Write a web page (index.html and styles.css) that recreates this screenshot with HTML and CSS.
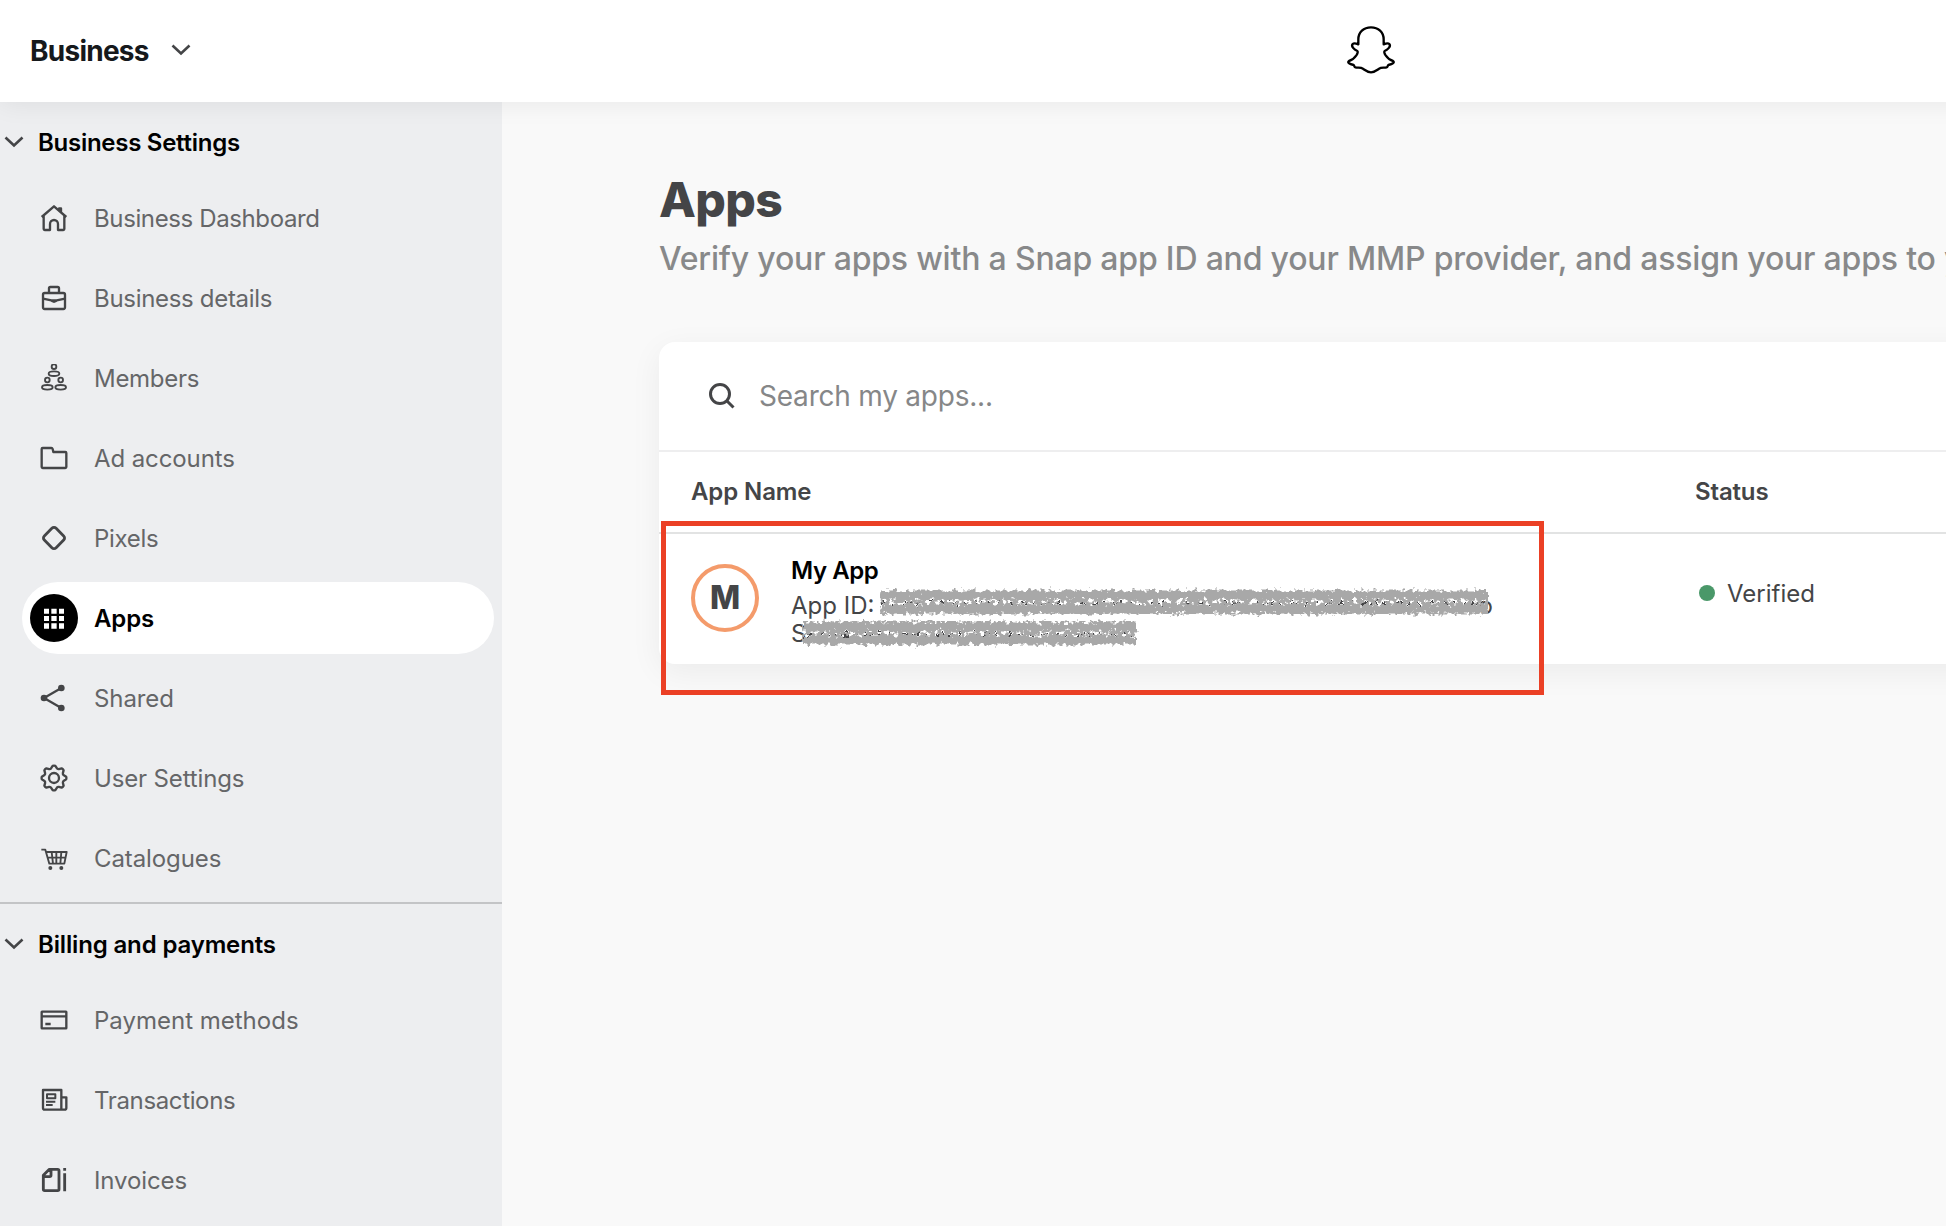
FILE: index.html
```html
<!DOCTYPE html>
<html lang="en">
<head>
	<meta charset="UTF-8">
	<title>Apps</title>
	<link rel="stylesheet" href="styles.css">
</head>
<body>
	<div class="header">
		<div class="switcher">
			<span class="switcher-name">Business</span>
			<svg class="chevron" viewBox="0 0 20 12"><path d="M1.5 1.5 L10 9.5 L18.5 1.5"/></svg>
		</div>
		<svg class="logo" viewBox="78 45 150 147">
			<path d="M115 103 V88 C115 66 131 52 153 52 C175 52 191 66 191 88 V103 C198 100 204 98 208 102 C214 109 203 119 194 123 C191 126 193 130 197 136 C204 146 211 151 219 153 C225 157 219 162 205 165 C202 168 204 171 200 172 C192 174 184 172 177 176 C168 182 163 187 153 187 C143 187 138 182 129 176 C122 172 114 174 106 172 C102 171 104 168 101 165 C87 162 81 157 87 153 C95 151 102 146 109 136 C113 130 115 126 112 123 C103 119 92 109 98 102 C102 98 108 100 115 103 Z"/>
		</svg>
	</div>
	<div class="wrap">
		<div class="side">
			<div class="group">
				<div class="group-title">
					<svg class="chevron" viewBox="0 0 20 12"><path d="M1.5 1.5 L10 9.5 L18.5 1.5"/></svg>
					<span class="t-settings">Business Settings</span>
				</div>
				<ul>
					<li>
						<i><svg viewBox="-42 -42 84 84"><path d="M-37 -3 L0 -35 L37 -3 M-31 -7 V33 Q-31 36 -28 36 H-12 V18 A12 12 0 0 1 12 18 V36 H28 Q31 36 31 33 V-7 M13 -29 H21 V-18"/></svg></i>
						<span class="t-dash">Business Dashboard</span>
					</li>
					<li>
						<i><svg viewBox="-42 -42 84 84"><rect x="-33" y="-15" width="66" height="48" rx="5"/><path d="M-15 -16 V-29 Q-15 -33 -11 -33 H11 Q15 -33 15 -29 V-16 M-33 2 L-8 7 H8 L33 2"/><path class="fill" d="M-12 6 H12 Q8 15 0 15 Q-8 15 -12 6 Z"/></svg></i>
						<span class="t-details">Business details</span>
					</li>
					<li>
						<i><svg viewBox="-42 -42 84 84" class="thin"><circle cx="0" cy="-34" r="7"/><ellipse cx="0" cy="-13" rx="16" ry="7"/><circle cx="-20" cy="6" r="7"/><circle cx="20" cy="6" r="7"/><ellipse cx="-20" cy="28" rx="16" ry="7"/><ellipse cx="20" cy="28" rx="16" ry="7"/></svg></i>
						<span class="t-members">Members</span>
					</li>
					<li>
						<i><svg viewBox="-42 -42 84 84"><path d="M-37 -27 Q-37 -30 -34 -30 H-8 Q-5 -30 -4 -27 L-2 -18 H34 Q37 -18 37 -15 V27 Q37 30 34 30 H-34 Q-37 30 -37 27 Z"/></svg></i>
						<span class="t-accounts">Ad accounts</span>
					</li>
					<li>
						<i><svg viewBox="-42 -42 84 84" class="bold"><rect x="-25" y="-25" width="50" height="50" rx="9" transform="rotate(45)"/></svg></i>
						<span class="t-pixels">Pixels</span>
					</li>
					<li class="active">
						<i><svg viewBox="-42 -42 84 84"><path class="fill" d="M-30 -28h15v15h-15z M-8 -28h16v15h-16z M15 -28h15v15h-15z M-30 -6h15v15h-15z M-8 -6h16v15h-16z M15 -6h15v15h-15z M-30 16h15v16h-15z M-8 16h16v16h-16z M15 16h15v16h-15z"/></svg></i>
						<span class="t-apps">Apps</span>
					</li>
					<li>
						<i><svg viewBox="-42 -42 84 84"><path d="M22 -30 L-30 0 L22 30"/><g class="fill"><circle cx="-30" cy="0" r="10"/><circle cx="22" cy="-30" r="10"/><circle cx="22" cy="30" r="10"/></g></svg></i>
						<span class="t-shared">Shared</span>
					</li>
					<li>
						<i><svg viewBox="-42 -42 84 84"><circle cx="0" cy="0" r="15"/><path d="M36.5 -4 Q38 0 36.5 4 L28.6 9 Q26 12 26.6 14.5 L28.8 23 Q27 27 23 28.8 L14.5 26.6 Q11 26 9 28.6 L4 36.5 Q0 38 -4 36.5 L-9 28.6 Q-12 26 -14.5 26.6 L-23 28.8 Q-27 27 -28.8 23 L-26.6 14.5 Q-26 11 -28.6 9 L-36.5 4 Q-38 0 -36.5 -4 L-28.6 -9 Q-26 -12 -26.6 -14.5 L-28.8 -23 Q-27 -27 -23 -28.8 L-14.5 -26.6 Q-11 -26 -9 -28.6 L-4 -36.5 Q0 -38 4 -36.5 L9 -28.6 Q12 -26 14.5 -26.6 L23 -28.8 Q27 -27 28.8 -23 L26.6 -14.5 Q26 -11 28.6 -9 Z"/></svg></i>
						<span class="t-user">User Settings</span>
					</li>
					<li>
						<i><svg viewBox="-42 -42 84 84" class="thin"><path d="M-38 -25 H-26 L-14 17 H31 L38 -18 H-24 M-20 -1 H35 M-7 -18 L-3 17 M7 -18 V17 M22 -18 L19 17"/><g class="fill"><circle cx="-11" cy="30" r="6"/><circle cx="22" cy="30" r="6"/></g></svg></i>
						<span class="t-cat">Catalogues</span>
					</li>
				</ul>
			</div>
			<div class="group">
				<div class="group-title">
					<svg class="chevron" viewBox="0 0 20 12"><path d="M1.5 1.5 L10 9.5 L18.5 1.5"/></svg>
					<span class="t-billing">Billing and payments</span>
				</div>
				<ul>
					<li>
						<i><svg viewBox="-42 -42 84 84"><rect x="-37" y="-25" width="74" height="50" rx="1"/><path d="M-37 -11 H37 M-26 12 H-10"/></svg></i>
						<span class="t-pay">Payment methods</span>
					</li>
					<li>
						<i><svg viewBox="-42 -42 84 84"><path d="M-33 -30 H22 V29 H-28 Q-33 29 -33 24 Z M22 -8 H37 V24 Q37 29 32 29 H22"/><path class="small" d="M-21 -17 H4 V-5 H-21 Z M-24 5 H4 M-24 15 H-4"/></svg></i>
						<span class="t-trans">Transactions</span>
					</li>
					<li>
						<i><svg viewBox="-42 -42 84 84" class="bold"><path d="M-14 -32 H11 Q15 -32 15 -28 V28 Q15 32 11 32 H-28 Q-32 32 -32 28 V-14 Z M-9 -31 V-14 Q-9 -10 -13 -10 H-31 M32 -36 V-28 M32 -20 V34"/></svg></i>
						<span class="t-inv">Invoices</span>
					</li>
				</ul>
			</div>
		</div>
		<div class="main">
			<h1>Apps</h1>
			<p class="intro">Verify your apps with a Snap app ID and your MMP provider, and assign your apps to your</p>
			<div class="card">
				<div class="search">
					<svg viewBox="0 0 28 28"><circle cx="12" cy="12" r="9.5"/><path d="M19 19 L25.5 25.5"/></svg>
					<span>Search my apps...</span>
				</div>
				<div class="row thead">
					<div class="col-name"><span class="t-name">App Name</span></div>
					<div class="col-status"><span class="t-status">Status</span></div>
				</div>
				<div class="row">
					<div class="col-name app">
						<div class="avatar">M</div>
						<div class="info">
							<div class="app-name">My App</div>
							<div class="app-id"><span class="t-id">App ID:</span><span class="tail">o</span></div>
							<div class="app-id">S</div>
							<!-- chalk strokes over the id -->
							<svg class="chalk" viewBox="0 0 710 66">
								<filter id="rough" x="-2%" y="-30%" width="104%" height="160%">
									<feTurbulence type="fractalNoise" baseFrequency="0.24" numOctaves="2" seed="4" result="n"/>
									<feDisplacementMap in="SourceGraphic" in2="n" scale="11" xChannelSelector="R" yChannelSelector="G"/>
								</filter>
								<filter id="grain" x="-2%" y="-30%" width="104%" height="160%">
									<feTurbulence type="fractalNoise" baseFrequency="0.22" numOctaves="2" seed="9"/>
									<feColorMatrix values="0 0 0 0 0  0 0 0 0 0  0 0 0 0 0  14 0 0 0 -6.3" result="m"/>
									<feComposite in="SourceGraphic" in2="m" operator="in"/>
								</filter>
								<g class="ink" filter="url(#rough)">
									<path d="M92 18 H696 M112 23 H690"/>
									<path d="M18 49 H342 M30 53 H330"/>
								</g>
								<g class="dust" filter="url(#grain)">
									<path d="M90 17 H698"/>
									<path d="M12 48 H346"/>
								</g>
								<g class="bands" filter="url(#rough)">
									<path d="M92 10 H697 M92 24 H697"/>
									<path d="M14 42 H346 M14 55 H346"/>
								</g>
							</svg>
						</div>
					</div>
					<div class="col-status verified"><b></b><span>Verified</span></div>
				</div>
				<div class="mark"></div>
			</div>
		</div>
	</div>
</body>
</html>
```
FILE: styles.css
```css
*{
	margin: 0;
	padding: 0;
	box-sizing: border-box;
}
body{
	height: 1226px;
	overflow: hidden;
	background: #f9f9f9;
	font-family: Inter, "Liberation Sans", sans-serif;
	font-size: 24px;
	color: #444547;
}
svg{
	display: block;
	fill: none;
	stroke: #444547;
}
span{
	white-space: nowrap;
}
.header{
	width: 2742px;
	height: 102px;
	display: grid;
	grid-template-columns: 1fr auto 1fr;
	align-items: center;
	background: #fff;
	position: relative;
	z-index: 1;
	box-shadow: 0 2px 24px rgba(0,0,0,0.07);
}
.switcher{
	display: flex;
	align-items: center;
	gap: 22px;
	padding-left: 30px;
}
.switcher-name{
	font-size: 28px;
	font-weight: 700;
	color: #16191c;
	letter-spacing: -0.75px;
}
.chevron{
	width: 20px;
	height: 12px;
	stroke-width: 2.6;
}
.switcher .chevron{
	margin-top: -2px;
}
.logo{
	width: 50px;
	height: 49px;
	margin-top: -3px;
	stroke: #000;
	stroke-width: 7;
	stroke-linejoin: round;
}
.wrap{
	width: 2742px;
	height: 1124px;
	display: flex;
}
.side{
	width: 502px;
	flex: none;
	background: #edeef0;
	overflow: hidden;
}
.group + .group{
	border-top: 2px solid #c3c4c6;
}
.group-title{
	height: 80px;
	display: flex;
	align-items: center;
	gap: 14px;
	padding-left: 4px;
	font-weight: 600;
	color: #000;
}
.side ul{
	list-style: none;
}
.side li{
	height: 72px;
	margin: 0 8px 8px 22px;
	padding-left: 8px;
	display: flex;
	align-items: center;
	gap: 16px;
	border-radius: 36px;
	color: #656668;
}
.side li i{
	width: 48px;
	height: 48px;
	display: flex;
	align-items: center;
	justify-content: center;
	border-radius: 50%;
}
.side li svg{
	width: 28px;
	height: 28px;
	stroke-width: 7;
	stroke-linejoin: round;
}
.side li svg.thin{
	stroke-width: 5.6;
}
.side li svg.bold{
	stroke-width: 8.5;
}
.side .small{
	stroke-width: 6;
}
.fill{
	fill: #444547;
	stroke: none;
}
.side li.active{
	background: #fff;
	color: #000;
	font-weight: 600;
}
.side li.active i{
	background: #000;
}
.active .fill{
	fill: #fff;
}
.t-settings{
	letter-spacing: -0.27px;
}
.t-dash{
	letter-spacing: -0.38px;
}
.t-details{
	letter-spacing: -0.31px;
}
.t-members, .t-pixels{
	letter-spacing: -0.28px;
}
.t-accounts, .t-shared, .t-inv, .t-name, .t-cat{
	letter-spacing: -0.1px;
}
.t-apps, .t-user, .t-billing, .t-status{
	letter-spacing: -0.15px;
}
.t-trans{
	letter-spacing: -0.36px;
}
.main{
	flex: 1;
	padding: 68px 0 0 157px;
}
h1{
	font-size: 48px;
	line-height: 60px;
	font-weight: 800;
	letter-spacing: -0.6px;
}
.intro{
	margin-top: 9px;
	font-size: 32px;
	line-height: 40px;
	font-weight: 500;
	letter-spacing: -0.19px;
	color: #88898a;
	white-space: nowrap;
}
.card{
	height: 322px;
	margin-top: 63px;
	position: relative;
	background: #fff;
	border-radius: 16px;
	box-shadow: 0 8px 32px rgba(0,0,0,0.06);
}
.search{
	height: 110px;
	display: flex;
	align-items: center;
	gap: 23px;
	padding-left: 49px;
	border-bottom: 2px solid #eeeeef;
	font-size: 28px;
	letter-spacing: -0.22px;
	color: #868788;
}
.search svg{
	width: 28px;
	height: 28px;
	stroke-width: 3;
}
.row{
	height: 130px;
	display: flex;
	align-items: center;
	padding-left: 32px;
}
.thead{
	height: 82px;
	padding-bottom: 2px;
	border-bottom: 2px solid #e2e3e3;
	font-weight: 600;
}
.col-name{
	width: 1004px;
}
.app{
	display: flex;
	gap: 32px;
}
.avatar{
	width: 68px;
	height: 68px;
	margin-top: 10px;
	border: 4px solid #f49b6b;
	border-radius: 50%;
	line-height: 60px;
	text-align: center;
	font-size: 32px;
	font-weight: 800;
}
.info{
	position: relative;
}
.app-name{
	height: 37px;
	margin-bottom: 0;
	line-height: 34px;
	font-weight: 600;
	letter-spacing: -0.45px;
	color: #000;
}
.app-id{
	display: flex;
	height: 28px;
	margin-bottom: 0;
	line-height: 30px;
}
.info{
	height: 90px;
}
.tail{
	margin-left: 604px;
}
.chalk{
	position: absolute;
	top: 31px;
	left: -1px;
	width: 710px;
	height: 66px;
}
.ink{
	stroke: #444547;
	stroke-width: 2;
	stroke-dasharray: 6 5 3 9 8 4;
}
.dust{
	stroke: #a8a8a8;
	stroke-width: 24;
}
.bands{
	stroke: #a8a8a8;
	stroke-width: 9;
}
.verified{
	display: flex;
	align-items: center;
	gap: 12px;
	padding: 0 0 12px 4px;
}
.verified b{
	width: 16px;
	height: 16px;
	border-radius: 50%;
	background: #4a9869;
}
/* frame round the app row */
.mark{
	position: absolute;
	top: 179px;
	left: 2px;
	width: 883px;
	height: 174px;
	border: 5px solid #eb4025;
}
```
